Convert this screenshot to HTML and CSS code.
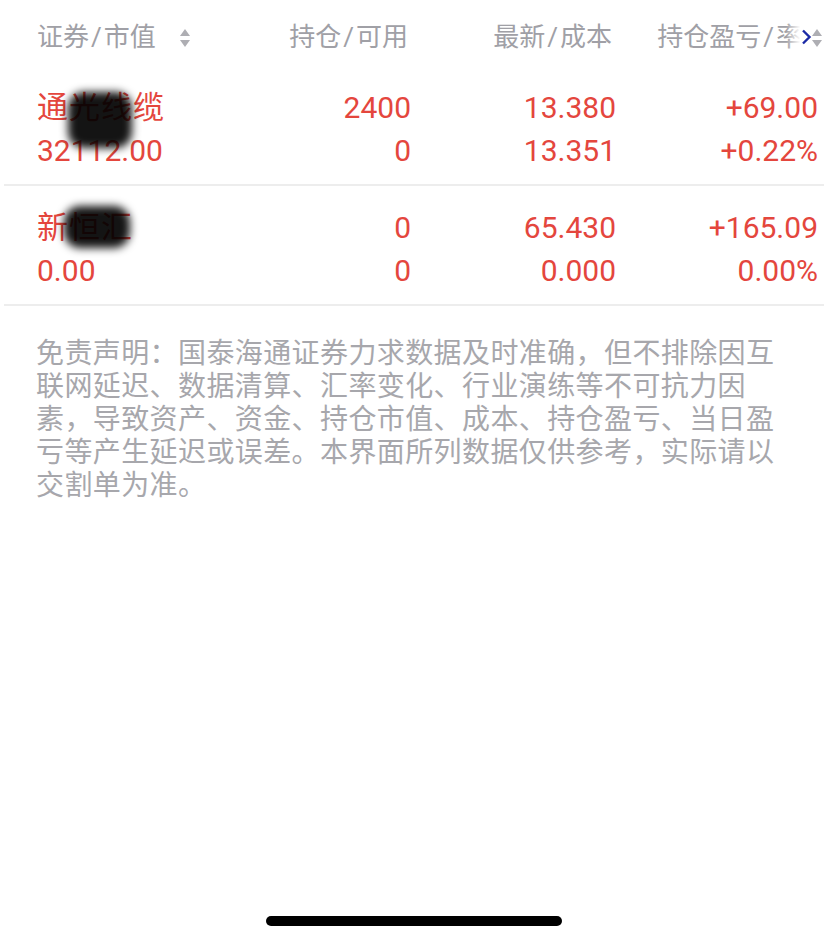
FILE: index.html
```html
<!DOCTYPE html>
<html lang="zh-CN">
<head>
  <meta charset="UTF-8" />
  <meta name="viewport" content="width=device-width, initial-scale=1.0" />
  <title>持仓</title>
  <link rel="stylesheet" href="styles.css">
</head>
<body>
  <div class="holdings">
    <div class="head">
      <div class="col first">证券<i>/</i>市值<span class="sort"></span></div>
      <div class="col">持仓<i>/</i>可用</div>
      <div class="col">最新<i>/</i>成本</div>
      <div class="col">持仓盈亏<i>/</i>率<span class="sort"></span></div>
      <div class="more">
        <svg width="12" height="16" viewBox="0 0 12 16"><path d="M3 1.5 L9.5 8 L3 14.5" fill="none" stroke="#1b2aa6" stroke-width="2.4" /></svg>
      </div>
    </div>

    <div class="row">
      <div class="col first">
        <div class="name">通光线缆</div>
        <div>32112.00</div>
      </div>
      <div class="col"><div>2400</div><div>0</div></div>
      <div class="col"><div>13.380</div><div>13.351</div></div>
      <div class="col"><div>+69.00</div><div>+0.22%</div></div>
      <span class="smudge one"></span>
    </div>

    <div class="row">
      <div class="col first">
        <div class="name">新恒汇</div>
        <div>0.00</div>
      </div>
      <div class="col"><div>0</div><div>0</div></div>
      <div class="col"><div>65.430</div><div>0.000</div></div>
      <div class="col"><div>+165.09</div><div>0.00%</div></div>
      <span class="smudge two"></span>
    </div>
  </div>

  <p class="disclaimer">免责声明：国泰海通证券力求数据及时准确，但不排除因互联网延迟、数据清算、汇率变化、行业演练等不可抗力因素，导致资产、资金、持仓市值、成本、持仓盈亏、当日盈亏等产生延迟或误差。本界面所列数据仅供参考，实际请以交割单为准。</p>

  <div class="home-bar"></div>
</body>
</html>
```

FILE: styles.css
```css
body {
  margin: 0;
  background: #fff;
  font-family: Roboto, "Noto Sans CJK SC", sans-serif;
}

.holdings {
  margin: 0 4px;
}

.head {
  position: relative;
  display: grid;
  grid-template-columns: 171px 200px 204px 1fr;
  padding: 24px 2px 16px 33px;
  height: 26px;
  font-size: 26px;
  line-height: 26px;
  color: #a0a0a6;
}

.head .col {
  text-align: right;
  white-space: nowrap;
}

.head .first {
  text-align: left;
}

.head i {
  font-style: normal;
  margin: 0 2px;
}

.sort {
  display: inline-block;
  position: relative;
  width: 10px;
  height: 18px;
  margin-left: 10px;
  vertical-align: -1px;
}

.sort::before,
.sort::after {
  content: "";
  position: absolute;
  left: 0;
  border-left: 5px solid transparent;
  border-right: 5px solid transparent;
}

.sort::before {
  top: 0;
  border-bottom: 7px solid #aeaeb3;
}

.sort::after {
  bottom: 0;
  border-top: 7px solid #aeaeb3;
}

.head .first .sort {
  margin-left: 24px;
}

.more {
  position: absolute;
  right: 12px;
  top: 22px;
  width: 26px;
  height: 30px;
  display: flex;
  align-items: center;
  justify-content: flex-end;
  background: linear-gradient(to right, rgba(255, 255, 255, 0), #fff 55%);
}

.row {
  position: relative;
  display: grid;
  grid-template-columns: 174px 200px 205px 1fr;
  padding: 20px 6px 12px 33px;
  border-bottom: 2px solid #ededed;
  font-size: 30px;
  line-height: 43px;
  color: #e4463d;
}

.row .col {
  text-align: right;
  white-space: nowrap;
}

.row .first {
  text-align: left;
}

.name {
  font-size: 31px;
  letter-spacing: 1px;
}

.smudge {
  position: absolute;
  background: rgba(0, 0, 0, 0.92);
  border-radius: 16px;
  filter: blur(4px);
}

.smudge.one {
  left: 64px;
  top: 26px;
  width: 64px;
  height: 56px;
}

.smudge.two {
  left: 60px;
  top: 20px;
  width: 66px;
  height: 42px;
}

.disclaimer {
  margin: 0;
  padding: 29px 36px 0;
  font-family: "Noto Sans CJK SC", sans-serif;
  font-size: 28px;
  line-height: 33px;
  letter-spacing: 0.4px;
  color: #a7a7ac;
}

.home-bar {
  position: fixed;
  left: 266px;
  bottom: 17px;
  width: 296px;
  height: 10px;
  border-radius: 5px;
  background: #000;
}
```
